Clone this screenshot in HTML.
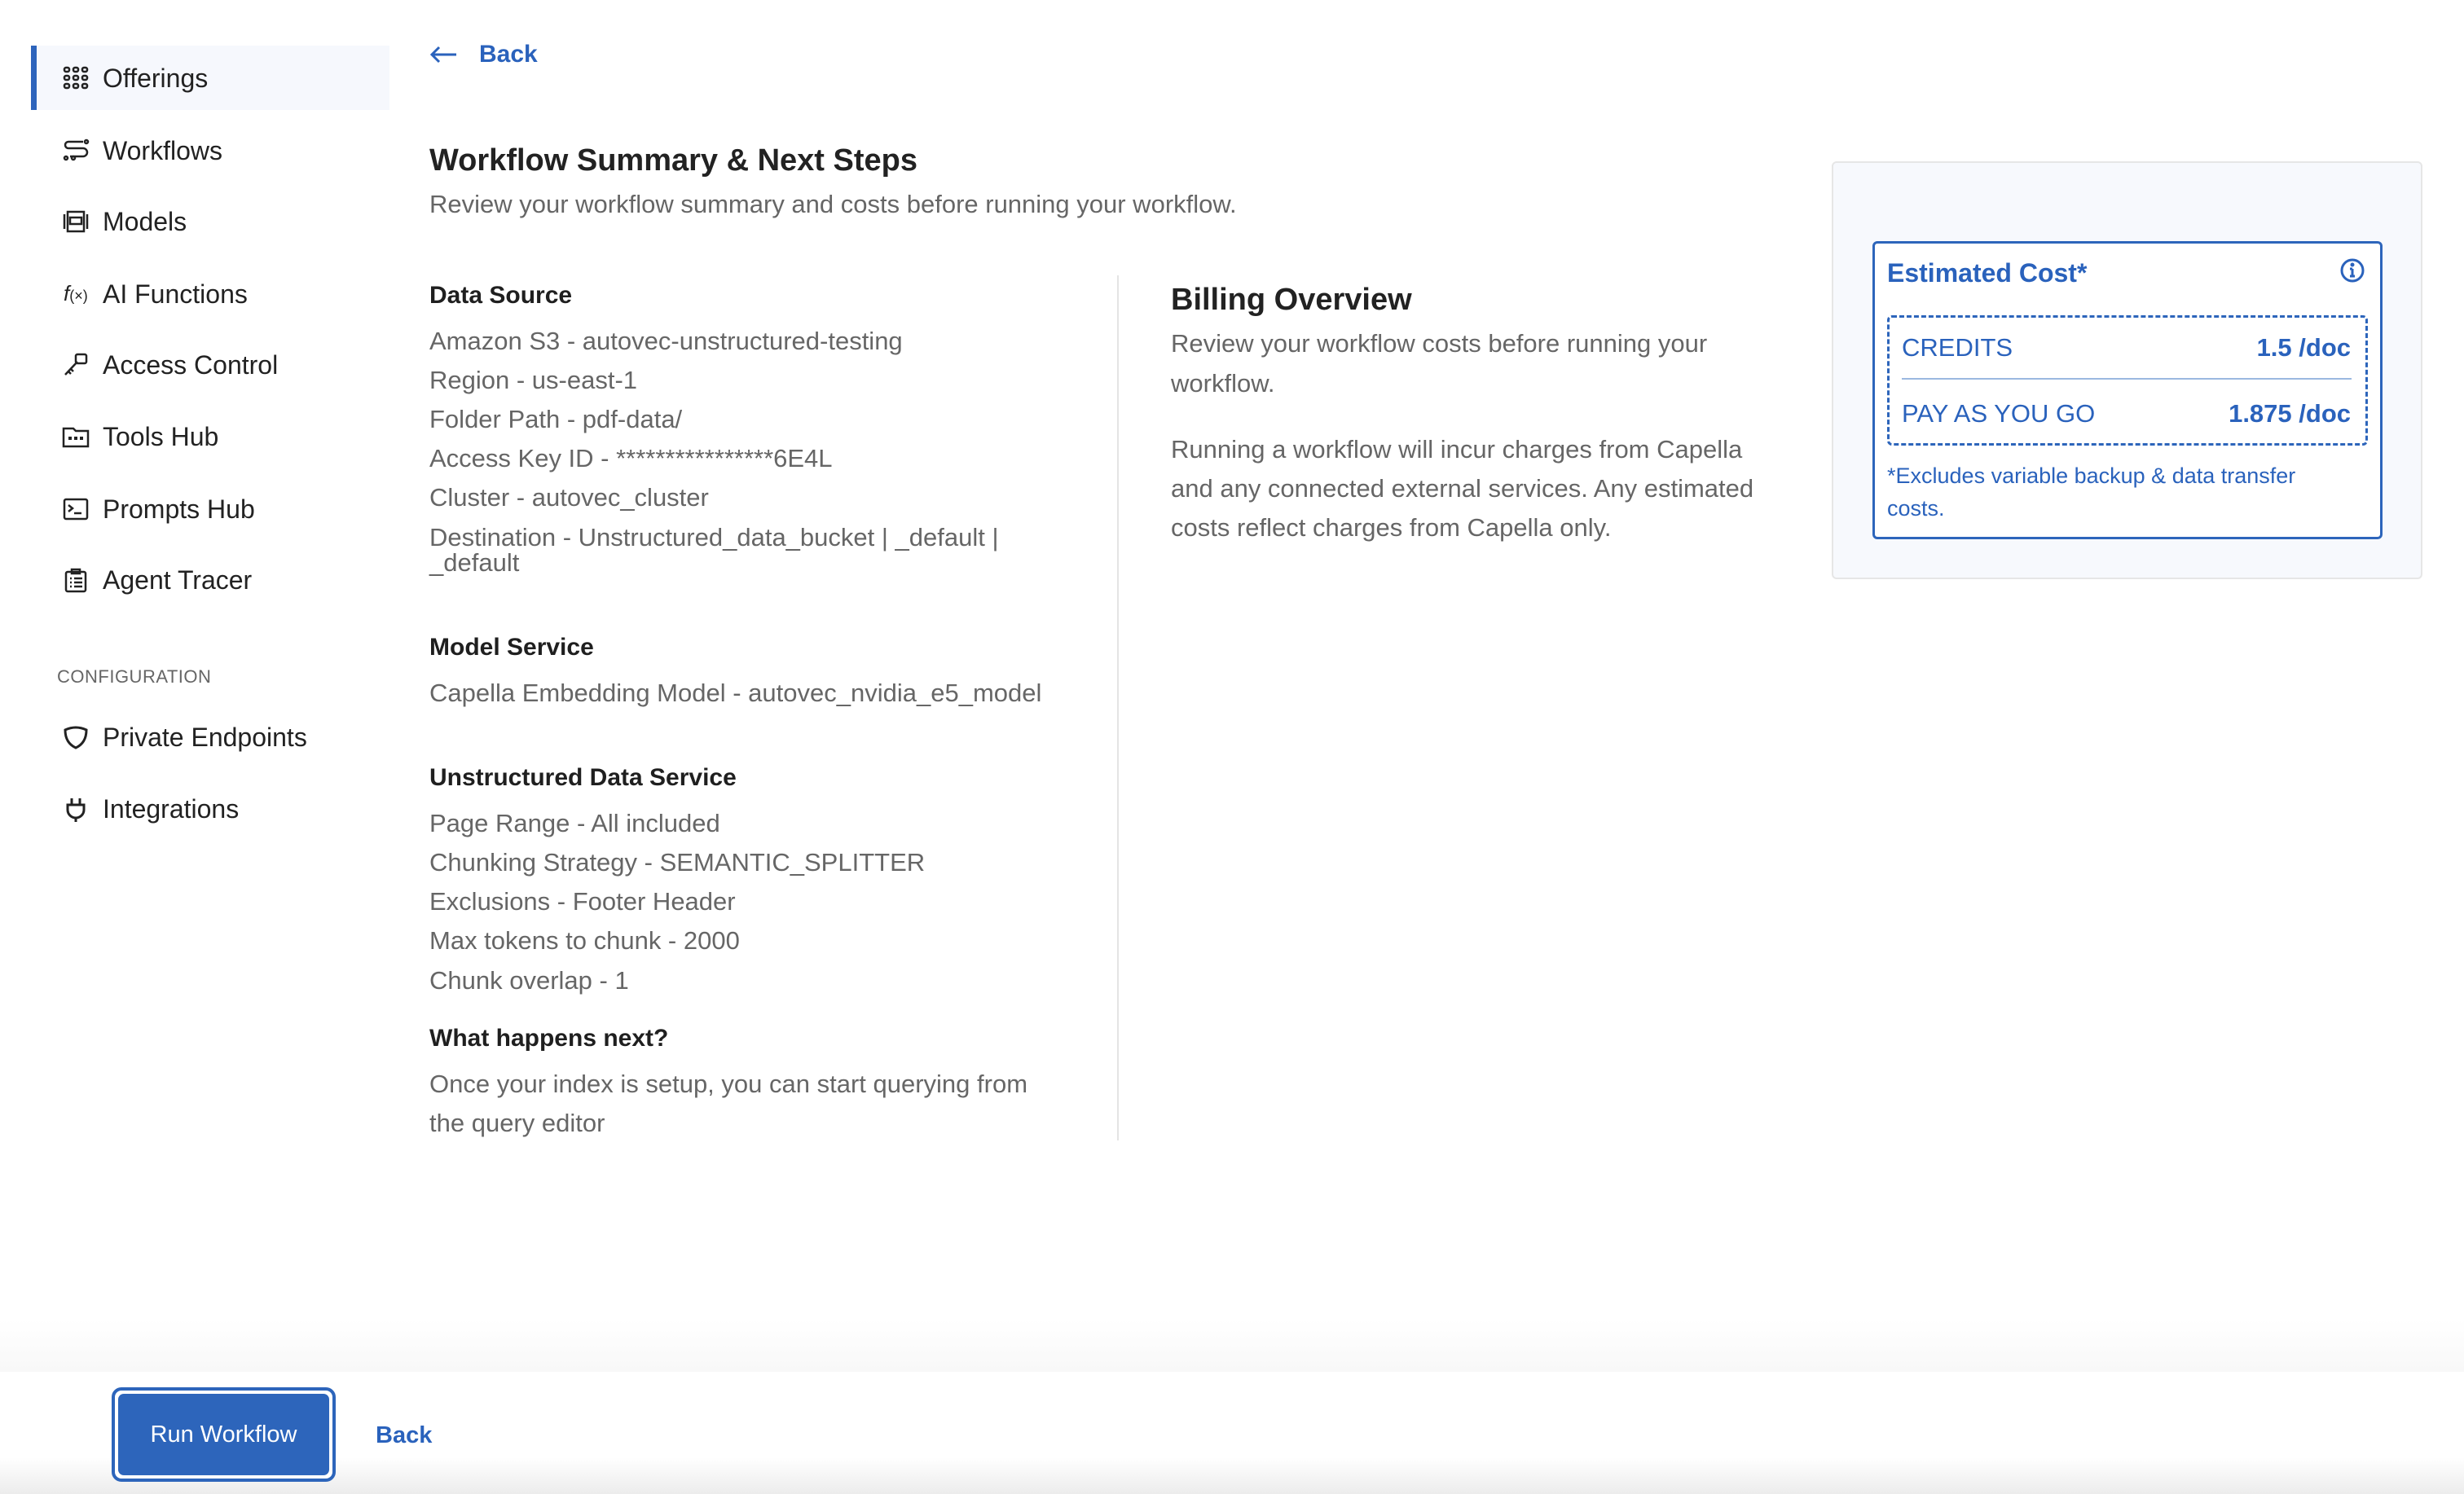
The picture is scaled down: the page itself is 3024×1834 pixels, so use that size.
<!DOCTYPE html>
<html><head><meta charset="utf-8"><style>
*{margin:0;padding:0;box-sizing:border-box}
body{width:3024px;height:1834px;position:relative;background:#fff;font-family:"Liberation Sans",Arial,sans-serif;overflow:hidden;color:#1f1f1f}
.a{position:absolute;white-space:nowrap}
.nav{font-size:32px;line-height:40px;color:#222;left:126px}
.ic{position:absolute;left:76px;width:34px;height:34px}
.g{color:#666;font-size:31px;line-height:40px}
.h{font-size:30px;line-height:40px;font-weight:bold;color:#1f1f1f}
.blue{color:#2a62bc}
</style></head><body>
<div class="a" style="left:38px;top:56px;width:440px;height:79px;background:#f6f8fd"></div>
<div class="a" style="left:38px;top:56px;width:7px;height:79px;background:#2d64bc"></div>

<svg class="ic" style="top:79px" viewBox="0 0 34 34" fill="none" stroke="#222" stroke-width="2.5"><rect x="3" y="4" width="6" height="5" rx="2"/><rect x="14" y="4" width="6" height="5" rx="2"/><rect x="25" y="4" width="6" height="5" rx="2"/><rect x="3" y="14" width="6" height="5" rx="2"/><rect x="14" y="14" width="6" height="5" rx="2"/><rect x="25" y="14" width="6" height="5" rx="2"/><rect x="3" y="24" width="6" height="5" rx="2"/><rect x="14" y="24" width="6" height="5" rx="2"/><rect x="25" y="24" width="6" height="5" rx="2"/></svg>
<div class="a nav" style="top:76px">Offerings</div>
<svg class="ic" style="top:168px" viewBox="0 0 34 34" fill="none" stroke="#222" stroke-width="2.5"><path d="M26 6H8a4 4 0 0 0 0 8h18a5 5 0 0 1 0 10H10"/><circle cx="30" cy="6" r="2"/><circle cx="5" cy="26" r="2"/><circle cx="14" cy="26" r="2"/></svg>
<div class="a nav" style="top:165px">Workflows</div>
<svg class="ic" style="top:255px" viewBox="0 0 34 34" fill="none" stroke="#222" stroke-width="2.5"><path d="M3 8v18M31 8v18"/><rect x="7" y="5" width="20" height="24"/><rect x="10" y="12" width="14" height="8"/></svg>
<div class="a nav" style="top:252px">Models</div>
<div class="a" style="left:78px;top:345px;font-size:26px;font-style:italic;color:#222">f<span style="font-size:18px;font-style:normal">(×)</span></div>
<div class="a nav" style="top:341px">AI Functions</div>
<svg class="ic" style="top:431px" viewBox="0 0 34 34" fill="none" stroke="#222" stroke-width="2.5"><rect x="17" y="4" width="13" height="11" rx="2"/><path d="M19 13L4 29M8 25l3 3M11 22l3 3"/></svg>
<div class="a nav" style="top:428px">Access Control</div>
<svg class="ic" style="top:519px" viewBox="0 0 34 34" fill="none" stroke="#222" stroke-width="2.5"><path d="M2 7h12l3 3h15v19H2z"/><path d="M8 19h4M15 19h4M22 19h4" stroke-width="4"/></svg>
<div class="a nav" style="top:516px">Tools Hub</div>
<svg class="ic" style="top:608px" viewBox="0 0 34 34" fill="none" stroke="#222" stroke-width="2.5"><rect x="3" y="5" width="28" height="24" rx="2"/><path d="M8 12l5 4-5 4M15 22h9"/></svg>
<div class="a nav" style="top:605px">Prompts Hub</div>
<svg class="ic" style="top:695px" viewBox="0 0 34 34" fill="none" stroke="#222" stroke-width="2.5"><rect x="5" y="7" width="24" height="24" rx="2"/><rect x="12" y="4" width="10" height="5"/><path d="M10 15h2M15 15h10M10 20h2M15 20h10M10 25h2M15 25h10"/></svg>
<div class="a nav" style="top:692px">Agent Tracer</div>
<div class="a" style="left:70px;top:818px;font-size:22px;line-height:26px;color:#666;letter-spacing:0.5px">CONFIGURATION</div>
<svg class="ic" style="top:888px" viewBox="0 0 34 34" fill="none" stroke="#222" stroke-width="3"><path d="M4 8q13-6 26 0q0 16-13 22Q4 24 4 8z"/></svg>
<div class="a nav" style="top:885px">Private Endpoints</div>
<svg class="ic" style="top:976px" viewBox="0 0 34 34" fill="none" stroke="#222" stroke-width="3"><path d="M12 4v8M22 4v8M7 12h20v6a10 10 0 0 1-20 0zM17 28v5"/></svg>
<div class="a nav" style="top:973px">Integrations</div>

<svg class="a" style="left:526px;top:55px" width="36" height="24" viewBox="0 0 36 24" fill="none" stroke="#2a62bc" stroke-width="3"><path d="M34 12H4M13 3l-9 9 9 9"/></svg>
<div class="a blue" style="left:588px;top:48px;font-size:30px;line-height:38px;font-weight:bold">Back</div>

<div class="a" style="left:527px;top:174px;font-size:38px;line-height:46px;font-weight:bold;color:#222">Workflow Summary &amp; Next Steps</div>
<div class="a g" style="left:527px;top:231px">Review your workflow summary and costs before running your workflow.</div>

<div class="a h" style="left:527px;top:343px">Data Source</div>
<div class="a g" style="left:527px;top:399px">Amazon S3 - autovec-unstructured-testing</div>
<div class="a g" style="left:527px;top:447px">Region - us-east-1</div>
<div class="a g" style="left:527px;top:495px">Folder Path - pdf-data/</div>
<div class="a g" style="left:527px;top:543px">Access Key ID - ****************6E4L</div>
<div class="a g" style="left:527px;top:591px">Cluster - autovec_cluster</div>
<div class="a g" style="left:527px;top:640px">Destination - Unstructured_data_bucket | _default |</div>
<div class="a g" style="left:527px;top:671px">_default</div>
<div class="a h" style="left:527px;top:775px">Model Service</div>
<div class="a g" style="left:527px;top:831px">Capella Embedding Model - autovec_nvidia_e5_model</div>
<div class="a h" style="left:527px;top:935px">Unstructured Data Service</div>
<div class="a g" style="left:527px;top:991px">Page Range - All included</div>
<div class="a g" style="left:527px;top:1039px">Chunking Strategy - SEMANTIC_SPLITTER</div>
<div class="a g" style="left:527px;top:1087px">Exclusions - Footer Header</div>
<div class="a g" style="left:527px;top:1135px">Max tokens to chunk - 2000</div>
<div class="a g" style="left:527px;top:1184px">Chunk overlap - 1</div>
<div class="a h" style="left:527px;top:1255px">What happens next?</div>
<div class="a g" style="left:527px;top:1311px">Once your index is setup, you can start querying from</div>
<div class="a g" style="left:527px;top:1359px">the query editor</div>

<div class="a" style="left:1371px;top:338px;width:2px;height:1062px;background:#e4e4e4"></div>

<div class="a" style="left:1437px;top:345px;font-size:38px;line-height:46px;font-weight:bold;color:#222">Billing Overview</div>
<div class="a g" style="left:1437px;top:402px">Review your workflow costs before running your</div>
<div class="a g" style="left:1437px;top:451px">workflow.</div>
<div class="a g" style="left:1437px;top:532px">Running a workflow will incur charges from Capella</div>
<div class="a g" style="left:1437px;top:580px">and any connected external services. Any estimated</div>
<div class="a g" style="left:1437px;top:628px">costs reflect charges from Capella only.</div>

<div class="a" style="left:2248px;top:198px;width:725px;height:513px;background:#f7f9fd;border:2px solid #e6e6e6;border-radius:6px"></div>
<div class="a" style="left:2298px;top:296px;width:626px;height:366px;background:#fff;border:3px solid #2d65bb;border-radius:6px"></div>
<div class="a blue" style="left:2316px;top:315px;font-size:32px;line-height:40px;font-weight:bold">Estimated Cost*</div>
<svg class="a" style="left:2871px;top:316px" width="32" height="32" viewBox="0 0 32 32" fill="none" stroke="#2a62bc" stroke-width="3"><circle cx="16" cy="16" r="13"/><path d="M16 14v9M13 23h6M13 14h3"/><circle cx="16" cy="9" r="1" fill="#2a62bc"/></svg>
<div class="a" style="left:2316px;top:387px;width:590px;height:160px;border:3px dashed #2d65bb;border-radius:6px"></div>
<div class="a blue" style="left:2334px;top:408px;font-size:31px;line-height:38px">CREDITS</div>
<div class="a blue" style="right:139px;top:408px;font-size:31px;line-height:38px;font-weight:bold">1.5 /doc</div>
<div class="a" style="left:2334px;top:464px;width:552px;height:2px;background:#9bb8e0"></div>
<div class="a blue" style="left:2334px;top:489px;font-size:31px;line-height:38px">PAY AS YOU GO</div>
<div class="a blue" style="right:139px;top:489px;font-size:31px;line-height:38px;font-weight:bold">1.875 /doc</div>
<div class="a blue" style="left:2316px;top:566px;font-size:27px;line-height:36px">*Excludes variable backup &amp; data transfer</div>
<div class="a blue" style="left:2316px;top:606px;font-size:27px;line-height:36px">costs.</div>

<div class="a" style="left:0;top:1620px;width:3024px;height:64px;background:linear-gradient(#fff,#f8f8f8)"></div>
<div class="a" style="left:0;top:1684px;width:3024px;height:150px;background:linear-gradient(#fff 0%,#fff 70%,#ececec 100%)"></div>
<div class="a" style="left:137px;top:1703px;width:275px;height:116px;border:4px solid #2d65bb;border-radius:12px;background:#fff"></div>
<div class="a" style="left:145px;top:1711px;width:259px;height:100px;background:#2d65bb;border-radius:7px;color:#fff;font-size:29px;line-height:100px;text-align:center">Run Workflow</div>
<div class="a blue" style="left:461px;top:1743px;font-size:29px;line-height:38px;font-weight:bold">Back</div>
</body></html>
